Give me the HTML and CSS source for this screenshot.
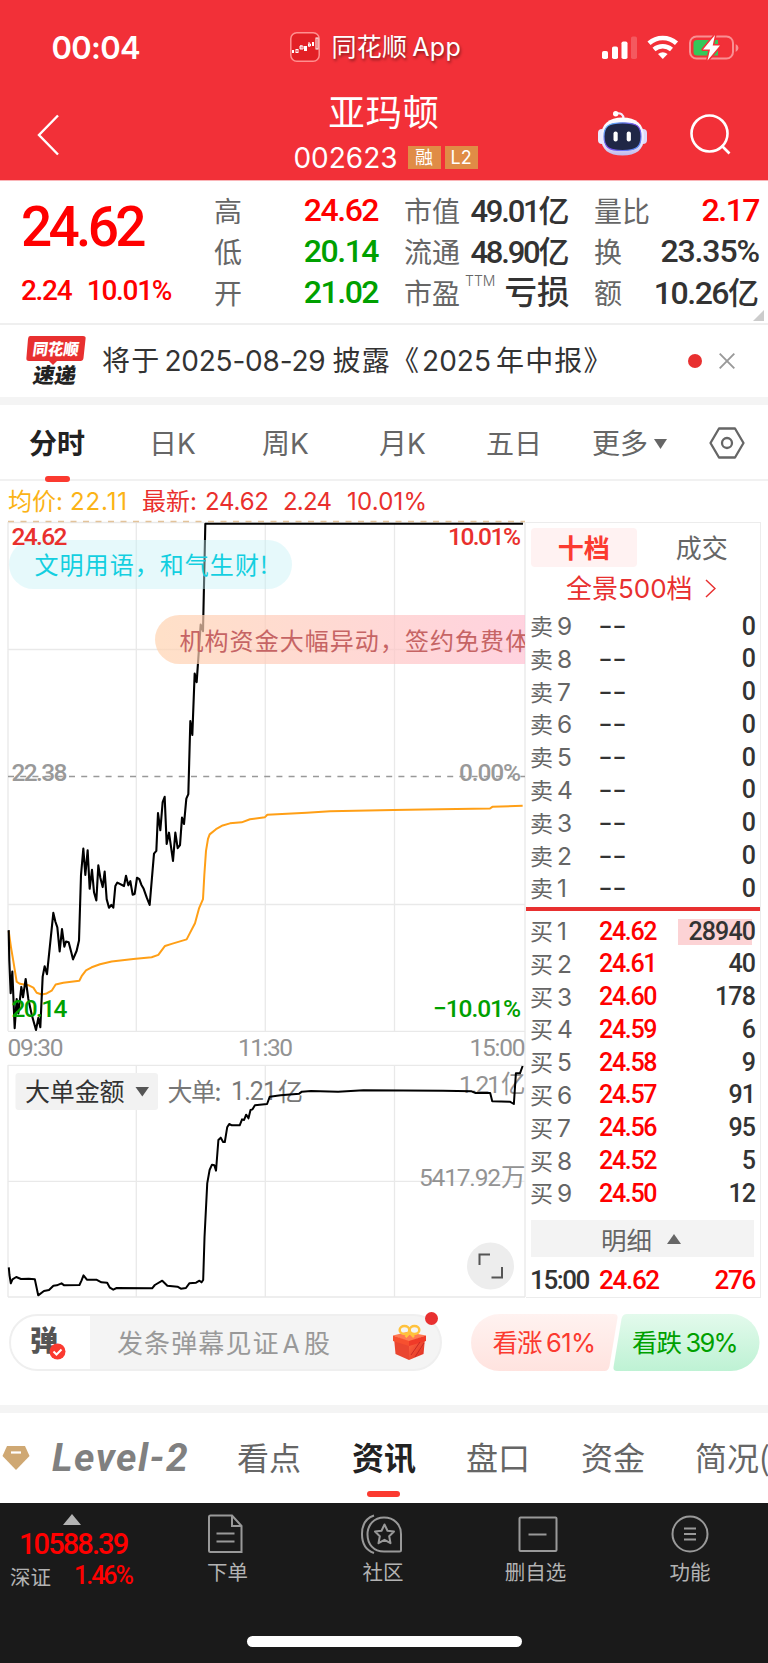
FILE: index.html
```html
<!DOCTYPE html>
<html lang="zh-CN">
<head>
<meta charset="utf-8">
<title>亚玛顿 002623</title>
<link rel="stylesheet" href="styles.css">
</head>
<body>
<header class="header">
  <div class="status">
    <div class="clock">00:04</div>
    <div class="island">
      <svg class="app-icon" width="30" height="30" viewBox="0 0 30 30"><rect x=".8" y=".8" width="28.4" height="28.4" rx="6" fill="#e22026" stroke="#ff8f8f" stroke-width="1.5"/><g fill="#fff"><rect x="2" y="18" width="2" height="3"/><rect x="14" y="14" width="3" height="5"/><rect x="22" y="10" width="2" height="4"/></g><g fill="none" stroke="#fff"><rect x="6" y="17.5" width="2" height="3"/><path d="M11 13v4M10 14h3v3h-3zM19 10v5M18.500 12h2v2h-2z"/><rect x="26" y="6" width="2" height="11"/></g></svg>
      <span class="app-name">同花顺 <i>App</i></span>
    </div>
    <svg class="indicators" width="150" height="30" viewBox="0 0 150 30">
      <g fill="#fff"><rect x="0" y="16" width="6" height="8" rx="1.800"/><rect x="10" y="11.500" width="6" height="12.500" rx="1.800"/><rect x="19.500" y="6.500" width="6" height="17.500" rx="1.800"/><rect x="29" y="1.500" width="6" height="22.500" rx="1.800" opacity=".2"/></g>
      <g fill="none" stroke="#fff" stroke-width="4.600"><path d="M47 8.300a20.500 20.500 0 0 1 27.500 0"/><path d="M52 14.500a13.500 13.500 0 0 1 17.500 0"/></g>
      <path fill="#fff" d="M56 19q4.800-3.600 9.600 0l-4.800 5z"/>
      <rect x="88" y="1.500" width="43" height="22" rx="6.500" fill="none" stroke="#f98f93" stroke-width="2"/>
      <path d="M95 5h17v15.500H95q-3.500 0-3.500-3.500V8.500Q91.500 5 95 5z" fill="#34c759"/><rect x="112" y="5" width="4" height="15.500" fill="#34c759"/>
      <path d="M133.700 9v8q2.800-1.300 2.800-4t-2.800-4z" fill="#f98f93"/>
      <path d="M113 0L101 14.500h7L105.500 25.500 118 10.500h-7.300z" fill="#fff" stroke="#f23038" stroke-width="3" stroke-linejoin="round" paint-order="stroke"/>
    </svg>
  </div>
  <div class="nav">
    <svg class="back" width="24" height="42" viewBox="0 0 24 42"><path d="M21 1.500L2 21l19 19.500" fill="none" stroke="#fff" stroke-width="2.400"/></svg>
    <div class="title">
      <h1>亚玛顿</h1>
      <div class="code"><span>002623</span><b class="margin-tag">融</b><b>L2</b></div>
    </div>
    <div class="actions">
      <svg width="50" height="46" viewBox="0 0 50 46">
        <defs><linearGradient id="shell" x2="0" y2="1"><stop stop-color="#fff"/><stop offset=".7" stop-color="#e8e6fb"/><stop offset="1" stop-color="#bdb8ec"/></linearGradient><linearGradient id="visor" x2="1" y2="1"><stop stop-color="#59c8ff"/><stop offset=".5" stop-color="#7a46e8"/><stop offset="1" stop-color="#58a0ff"/></linearGradient></defs>
        <path d="M17.500 3.500q8-1.500 8 5.500" fill="none" stroke="#f3ebff" stroke-width="2.200"/><circle cx="17.700" cy="3.700" r="2.700" fill="#fff"/>
        <rect x="0" y="19" width="8" height="15" rx="4" fill="#eceaff"/><rect x="41" y="19" width="8" height="15" rx="4" fill="#dcd9fa"/>
        <path d="M24.500 7.500C38 7.500 46 14 46 27S38 45.500 24.500 45.500 3 40 3 27 11 7.500 24.500 7.500z" fill="url(#shell)"/>
        <path d="M24.500 12.800c14 0 18.500 3 18.500 13.700s-4.500 14-18.500 14S6 37 6 26.500s4.500-13.700 18.500-13.700z" fill="#202746" stroke="url(#visor)" stroke-width="1.200"/>
        <rect x="15.500" y="21.500" width="4.200" height="10" rx="2" fill="#fff"/><rect x="28.700" y="21.500" width="4.200" height="10" rx="2" fill="#fff"/>
      </svg>
      <svg class="search" width="42" height="42" viewBox="0 0 42 42"><g fill="none" stroke="#fff" stroke-width="2.600"><circle cx="19.500" cy="20.500" r="18"/><path d="M31.500 32.500l8 8"/></g></svg>
    </div>
  </div>
</header>

<section class="quote">
  <div class="last"><strong>24.62</strong><div class="change"><span>2.24</span><span>10.01%</span></div></div>
  <dl class="facts">
    <div><dt>高</dt><dd class="up">24.62</dd></div>
    <div><dt>低</dt><dd class="down">20.14</dd></div>
    <div><dt>开</dt><dd class="down">21.02</dd></div>
  </dl>
  <dl class="facts">
    <div><dt>市值</dt><dd class="cap">49.01<em>亿</em></dd></div>
    <div><dt>流通</dt><dd class="cap">48.90<em>亿</em></dd></div>
    <div><dt>市盈<sup>TTM</sup></dt><dd class="cap loss"><em>亏损</em></dd></div>
  </dl>
  <dl class="facts">
    <div><dt>量比</dt><dd class="up">2.17</dd></div>
    <div><dt>换</dt><dd class="turnover">23.35%</dd></div>
    <div><dt>额</dt><dd>10.26<em>亿</em></dd></div>
  </dl>
  <i class="corner"></i>
</section>

<section class="notice">
  <svg width="64" height="52" viewBox="0 0 64 52">
    <path d="M5 1h53q3 0 2.600 2.500L58.500 23q-.4 3-3 3H32l-4 4-4-4H4q-3 0-2.600-3L3 4q.3-3 2-3z" fill="#e83030"/>
    <text class="logo-text" transform="translate(7 20) skewX(-8)" font-size="16" fill="#fff" textLength="46" lengthAdjust="spacingAndGlyphs">同花顺</text>
    <text class="logo-text" transform="translate(7 47.500) skewX(-10)" font-size="21" fill="#222" textLength="43" lengthAdjust="spacingAndGlyphs">速递</text>
  </svg>
  <p>将于<span class="date">2025-08-29</span>披露《<span class="year">2025</span>年中报》</p>
  <i class="dot"></i>
  <svg class="close" width="16" height="16" viewBox="0 0 16 16"><path d="M.7.700l14.600 14.600M15.300.700L.7 15.300" stroke="#999" stroke-width="1.900"/></svg>
</section>

<nav class="periods">
  <a class="active">分时</a><a>日K</a><a>周K</a><a>月K</a><a>五日</a><a class="more">更多<svg width="13" height="10" viewBox="0 0 13 10"><path d="M0 0h13L6.500 10z" fill="#666"/></svg></a>
  <svg class="settings" width="36" height="32" viewBox="0 0 36 32"><path d="M10 1.500h16L34.500 16 26 30.500H10L1.500 16z" fill="none" stroke="#666" stroke-width="2.300" stroke-linejoin="round"/><circle cx="18" cy="16" r="5" fill="none" stroke="#666" stroke-width="2.300"/></svg>
</nav>

<main class="market">
  <svg class="chart" width="526" height="817" viewBox="0 481 526 817">
    <defs>
      <linearGradient id="promo"><stop stop-color="#ffd3b0"/><stop offset="1" stop-color="#ffb9db"/></linearGradient>
      <clipPath id="plot"><rect x="8" y="520" width="517" height="777"/></clipPath>
    </defs>
    <g class="legend">
      <g fill="#fbb316"><text x="8" y="510" textLength="55">均价:</text><text x="70" y="510" textLength="57">22.11</text></g>
      <g fill="#e9302d"><text x="142" y="510" textLength="55">最新:</text><text x="205" y="510" textLength="64">24.62</text><text x="283" y="510" textLength="49">2.24</text><text x="347" y="510" textLength="80">10.01%</text></g>
    </g>
    <g fill="none" stroke="#e9e9e9" stroke-width="1.300">
      <path d="M8 522.500H525M8 649.500H525M8 904.500H525M8 1031.400H525M8 1065.400H525M8 1181.400H525M8 1297H525M8 522V1031M8 1065V1297M136.300 522V1031M136.300 1065V1297M265.300 522V1031M265.300 1065V1297M394.500 522V1031M394.500 1065V1297M525 522V1297"/>
    </g>
    <path d="M8 521.500H525" stroke="#e3c39a" stroke-width="1.300" stroke-dasharray="6 6.500"/>
    <path d="M8 776.500H525" stroke="#999" stroke-width="1.500" stroke-dasharray="6 6.200"/>
    <g transform="translate(0 510) scale(.33333 .34435)" fill="none" stroke-linejoin="round">
      <polyline vector-effect="non-scaling-stroke" stroke="#ff9f16" stroke-width="2" points="26,1222 33,1270 40,1310 50,1370 60,1376 85,1380 100,1387 110,1402 125,1407 140,1404 155,1396 167,1378 190,1373 238,1367 246,1352 258,1337 275,1328 300,1319 335,1311 400,1304 455,1299 475,1292 495,1266 515,1260 560,1247 570,1228 585,1200 597,1157 609,1130 613,1060 618,990 624,955 629,942 648,927 668,916 690,910 725,907 750,898 795,892 802,885 920,879 990,875 1180,871 1320,869 1470,867 1477,862 1568,859"/>
      <polyline vector-effect="non-scaling-stroke" stroke="#000" stroke-width="2.100" points="26,1220 28,1310 32,1403 37,1340 44,1505 50,1420 55,1462 64,1385 69,1415 77,1362 85,1420 95,1465 108,1510 115,1475 121,1502 128,1355 134,1325 141,1348 160,1170 166,1195 172,1212 179,1282 186,1217 193,1268 198,1253 206,1255 214,1285 219,1305 230,1280 237,1250 243,1060 250,983 256,1060 263,988 269,1100 276,1045 282,1110 289,1134 295,1032 301,1068 308,1095 314,1050 320,1130 327,1155 334,1147 340,1155 346,1092 352,1082 372,1092 378,1062 385,1090 391,1078 398,1117 404,1115 411,1068 418,1072 424,1088 431,1100 440,1125 449,1147 462,998 469,990 474,880 481,930 488,848 494,833 500,970 507,937 519,1019 526,937 533,982 540,973 546,893 552,912 559,838 565,825 571,613 577,653 584,475 590,500 602,333 609,352 616,40 1569,40"/>
    </g>
    <g clip-path="url(#plot)" class="bullet">
      <rect x="9" y="540" width="283" height="49" rx="24.500" fill="#c4f0f6" opacity=".43"/>
      <text x="34.500" y="574" fill="#13cfe0">文明用语，和气生财!</text>
      <rect x="155" y="615" width="480" height="49" rx="24.500" fill="url(#promo)" opacity=".7"/>
      <text x="179.500" y="649.500" fill="#c66464">机构资金大幅异动，签约免费体</text>
    </g>
    <g class="axis">
      <g fill="#e9302d"><text x="11.500" y="545" textLength="56">24.62</text><text x="448" y="545" textLength="73">10.01%</text></g>
      <g fill="#999"><text x="11.500" y="781" textLength="56">22.38</text><text x="459" y="781" textLength="62">0.00%</text></g>
      <g fill="#00a000"><text x="11.500" y="1017" textLength="56">20.14</text><text x="433" y="1017" textLength="88">−10.01%</text></g>
    </g>
    <g class="axis time" fill="#939393"><text x="7.500" y="1056" textLength="56">09:30</text><text x="238" y="1056" textLength="55">11:30</text><text x="469.500" y="1056" textLength="56">15:00</text></g>
    <rect x="15.500" y="1073" width="142.500" height="37" rx="3" fill="#f2f2f2"/>
    <text class="label" x="25" y="1101" fill="#333" textLength="99.500">大单金额</text>
    <path d="M135.500 1087h13.500l-6.700 9.500z" fill="#555"/>
    <text class="label" x="167.500" y="1101" fill="#777" textLength="54">大单:</text><text class="label mono" x="231" y="1100" fill="#777" textLength="46">1.21</text><text class="label" x="278" y="1101" fill="#777">亿</text>
    <g class="axis time" fill="#939393"><text x="459" y="1093" textLength="42">1.21</text><text x="501" y="1093">亿</text><text x="419" y="1186" textLength="82">5417.92</text><text x="501" y="1186">万</text></g>
    <g transform="translate(0 1030) scale(.33807 .33333)" fill="none" stroke="#000" stroke-linejoin="round">
      <polyline vector-effect="non-scaling-stroke" stroke-width="2" points="26,712 28,735 32,760 37,748 48,741 62,747 85,746 103,748 113,796 130,783 145,780 158,767 168,766 182,760 190,766 235,765 241,752 247,736 257,749 285,749 300,757 317,758 325,773 335,779 345,774 450,775 458,765 480,752 495,767 525,770 535,776 550,774 560,760 580,758 590,752 596,757 601,750 605,620 613,460 620,420 627,404 634,406 639,422 646,330 653,323 660,336 665,336 672,292 678,282 686,286 709,286 716,268 722,270 728,254 735,265 741,240 747,238 754,226 790,222 798,200 830,196 885,191 893,185 920,183 1000,185 1075,181 1310,182 1395,184 1407,189 1450,189 1456,214 1508,215 1520,222 1526,130 1538,130 1546,108"/>
    </g>
    <circle cx="490.500" cy="1266" r="23.500" fill="#ededed"/>
    <path d="M479.500 1265v-10.500H490M491.500 1277.500H502V1267" fill="none" stroke="#555" stroke-width="2"/>
  </svg>

  <aside class="depth">
    <div class="depth-tabs"><b>十档</b><span>成交</span></div>
    <div class="full-depth">全景500档<svg width="11" height="19" viewBox="0 0 11 19"><path d="M1 1l9 8.500L1 18" fill="none" stroke="#e83030" stroke-width="1.500"/></svg></div>
    <ul class="sell">
      <li><span>卖<i>9</i></span><b>--</b><em>0</em></li>
      <li><span>卖<i>8</i></span><b>--</b><em>0</em></li>
      <li><span>卖<i>7</i></span><b>--</b><em>0</em></li>
      <li><span>卖<i>6</i></span><b>--</b><em>0</em></li>
      <li><span>卖<i>5</i></span><b>--</b><em>0</em></li>
      <li><span>卖<i>4</i></span><b>--</b><em>0</em></li>
      <li><span>卖<i>3</i></span><b>--</b><em>0</em></li>
      <li><span>卖<i>2</i></span><b>--</b><em>0</em></li>
      <li><span>卖<i>1</i></span><b>--</b><em>0</em></li>
    </ul>
    <ul class="buy">
      <li class="large"><span>买<i>1</i></span><b>24.62</b><em>28940</em></li>
      <li><span>买<i>2</i></span><b>24.61</b><em>40</em></li>
      <li><span>买<i>3</i></span><b>24.60</b><em>178</em></li>
      <li><span>买<i>4</i></span><b>24.59</b><em>6</em></li>
      <li><span>买<i>5</i></span><b>24.58</b><em>9</em></li>
      <li><span>买<i>6</i></span><b>24.57</b><em>91</em></li>
      <li><span>买<i>7</i></span><b>24.56</b><em>95</em></li>
      <li><span>买<i>8</i></span><b>24.52</b><em>5</em></li>
      <li><span>买<i>9</i></span><b>24.50</b><em>12</em></li>
    </ul>
    <div class="detail">明细<svg width="14" height="10" viewBox="0 0 14 10"><path d="M7 0l7 10H0z" fill="#666"/></svg></div>
    <div class="tick"><span>15:00</span><b>24.62</b><em>276</em></div>
  </aside>
</main>

<section class="social">
  <div class="barrage">
    <div class="barrage-toggle">弹<svg width="17" height="17" viewBox="0 0 17 17"><circle cx="8.500" cy="8.500" r="8" fill="#fb3a30"/><path d="M4.500 8.500l3 3 5-5" fill="none" stroke="#fff" stroke-width="2"/></svg></div>
    <span class="placeholder">发条弹幕见证<i>A</i>股</span>
    <svg class="gift" width="36" height="38" viewBox="0 0 36 38">
      <defs><linearGradient id="box" x2="1" y2="1"><stop stop-color="#ff6a44"/><stop offset="1" stop-color="#dc281e"/></linearGradient></defs>
      <path d="M2 14l15 5v17L3.500 30z" fill="#ea4630"/><path d="M17 19l16-5-1.500 16L17 36z" fill="url(#box)"/>
      <path d="M1 11.500L15 8l19 3.500L17 18z" fill="#ff7a52"/><path d="M1 11.500L17 17v5L1 17z" fill="#f7502f"/><path d="M17 17l17-5.500V17l-17 5z" fill="#f03a28"/>
      <path d="M19 31l9-13M23 33l9-14" stroke="#c92a24" stroke-width="1"/>
      <g fill="none" stroke="#ffc23d" stroke-width="2.500"><ellipse cx="12.500" cy="6" rx="4.800" ry="4"/><ellipse cx="22.500" cy="6" rx="4.800" ry="4"/><path d="M17.500 9l-4 4M18 9l4 4"/></g>
    </svg>
    <i class="dot"></i>
  </div>
  <div class="vote">
    <svg width="290" height="57" viewBox="0 0 290 57">
      <defs><linearGradient id="bull" x2="0" y2="1"><stop stop-color="#fff2f0"/><stop offset="1" stop-color="#ffe3df"/></linearGradient><linearGradient id="bear" x2="0" y2="1"><stop stop-color="#e3faec"/><stop offset="1" stop-color="#bef2d4"/></linearGradient></defs>
      <path d="M29.500 0H144q4 0 3.500 4l-8 48q-1 5-5 5h-105a28.500 28.500 0 0 1 0-57z" fill="url(#bull)"/>
      <path d="M157 0H261a28.500 28.500 0 0 1 0 57H147q-4 0-3.500-4l8-48q1-5 5.500-5z" fill="url(#bear)"/>
      <g class="vote-label"><g fill="#fb3a30"><text x="22.500" y="38" textLength="50">看涨</text><text x="76" y="37.500" textLength="50">61%</text></g><g fill="#00a000"><text x="162" y="38" textLength="50">看跌</text><text x="215.500" y="37.500" textLength="53">39%</text></g></g>
    </svg>
  </div>
</section>

<nav class="sections">
  <svg class="gem" width="28" height="26" viewBox="0 0 28 26"><path d="M5 1h18l4.500 10L14 25 .5 11z" fill="#cfa873"/><path d="M9 7.500h10" stroke="#fff" stroke-width="2.200"/></svg>
  <a class="level">Level-2</a><a>看点</a><a class="active">资讯</a><a>盘口</a><a>资金</a><a class="last-tab">简况(</a>
</nav>

<footer class="toolbar">
  <div class="index"><svg width="18" height="11" viewBox="0 0 18 11"><path d="M9 0l9 11H0z" fill="#b3b3b3"/></svg><b>10588.39</b><p><span>深证</span><em>1.46%</em></p></div>
  <div class="tool"><svg width="44" height="40" viewBox="2.500 0 44 40"><g fill="none" stroke="#999" stroke-width="2"><path d="M7 1.500h21.500L38 12v26H7q-1.500 0-1.500-1.500V3Q5.500 1.500 7 1.500z"/><path d="M28.500 1.500V12H38M13 19.500h18M13 27.500h18"/></g></svg>下单</div>
  <div class="tool"><svg width="44" height="40" viewBox="1 0 44 40"><g fill="none" stroke="#999" stroke-width="2"><path d="M24 3.500c10 0 17 7 17 16.500v16q0 1.500-1.500 1.500H24C13.500 37.500 7.500 30 7.500 20.500S14 3.500 24 3.500z"/><path d="M14 1.500C5 4.500 2 12 2 20S5 36 14 39"/><path stroke-linejoin="round" d="M24.500 10.500l3 6.300 6.500.7-4.800 4.700 1.300 7-6-3.400-6 3.400 1.300-7-4.800-4.700 6.500-.7z"/></g></svg>社区</div>
  <div class="tool"><svg width="44" height="40" viewBox="-1.500 0 44 40"><g fill="none" stroke="#999" stroke-width="2"><rect x="4" y="3.500" width="37" height="33.500" rx="1"/><path d="M13 20.500h18"/></g></svg>删自选</div>
  <div class="tool"><svg width="44" height="40" viewBox="0 0 44 40"><g fill="none" stroke="#999" stroke-width="2"><circle cx="22" cy="20" r="17.500"/><path d="M16 14.500h12M16 20h12M16 25.500h12"/></g></svg>功能</div>
  <i class="home-bar"></i>
</footer>
</body>
</html>
```

FILE: styles.css
```css
* { box-sizing: border-box; }
body, h1, p, dl, dd, ul { margin: 0; padding: 0; }
body {
  width: 768px; background: #fff; color: #333; overflow-x: hidden;
  font-family: Inter, "Noto Sans CJK SC", sans-serif; white-space: nowrap;
}
i, em { font-style: normal; }
svg { display: block; flex: none; }
ul { list-style: none; }

/* header */
.header { height: 181px; background: #f23038; border-bottom: 1px solid #fab5b8; color: #fff; }
.status { height: 95px; display: grid; grid-template-columns: 290px 1fr 166px; align-items: center; }
.clock { padding-left: 51.500px; font-size: 31px; font-weight: 600; letter-spacing: -.7px; }
.island { display: flex; align-items: center; gap: 11.500px; font-size: 25px; line-height: 30px; text-shadow: 1px 2px 3px rgba(0,0,0,.45); margin-top: -2px; }
.app-name { font-family: "Noto Sans CJK SC", sans-serif; letter-spacing: .3px; margin-top: -2px; }
.app-name i { font-family: Inter, sans-serif; margin-left: -1px; }
.indicators { margin-top: 5px; }
.nav { height: 85px; display: grid; grid-template-columns: 170px 1fr 170px; align-items: center; }
.back { margin: -5px 0 0 37px; }
.title { text-align: center; }
.title h1 { font: 400 36.500px/50px "Noto Sans CJK SC", sans-serif; letter-spacing: .7px; margin-top: -13px; }
.code { display: flex; justify-content: center; align-items: center; gap: 4px; height: 38px; margin-top: 3px; padding-left: 3px; font-size: 28px; letter-spacing: 0; }
.code span { margin-right: 6px; }
.code b { width: 33px; height: 23px; background: #e08c46; font: 400 18px/23px Inter, "Noto Sans CJK SC", sans-serif; letter-spacing: 0; }
.actions { display: flex; align-items: center; gap: 42px; margin-top: -9px; }
.search { margin-top: 2px; }

/* quote */
.quote { position: relative; height: 144px; border-bottom: 2px solid #efefef; padding: 9px 9px 0 22px; display: grid; grid-template-columns: 166px 164px 164px 165px; column-gap: 26px; font-family: Roboto, "Noto Sans CJK SC", sans-serif; font-weight: 500; }
.last { color: #f00; }
.last strong { display: block; margin-left: -1px; font-size: 55px; font-weight: 500; line-height: 74px; letter-spacing: -3.700px; }
.change { display: flex; gap: 15.500px; margin-left: -1px; font-size: 28px; line-height: 32px; margin-top: 11px; letter-spacing: -1.300px; }
.facts div { height: 41px; display: flex; justify-content: space-between; align-items: center; }
.facts dt { position: relative; color: #666; font: 400 28px/41px "Noto Sans CJK SC", sans-serif; }
.facts dd { font-size: 32px; line-height: 39px; padding-bottom: 1px; letter-spacing: -1.500px; color: #333; }
.facts dd.up { color: #f00; }
.facts dd.down { color: #00a000; }
.facts dd em { font: 500 31px/38px "Noto Sans CJK SC", sans-serif; letter-spacing: 0; }
.facts dd.cap { font-size: 31px; letter-spacing: -2.200px; margin-right: -1.500px; }
.facts dd.loss em { font-size: 32.500px; }
.facts dd.turnover { letter-spacing: -1.100px; }
.facts sup { position: absolute; left: 61px; top: -6px; font: 300 14px/30px Inter, sans-serif; }
.corner { position: absolute; right: 4px; top: 129px; border-left: 11px solid transparent; border-bottom: 11px solid #ccc; }

/* notice */
.notice { height: 72px; display: flex; align-items: center; padding-left: 25px; }
.logo-text { font-family: "Noto Sans CJK SC", sans-serif; font-weight: 900; }
.notice p { margin-left: 13px; width: 584px; font: 400 28px/38px "Noto Sans CJK SC", sans-serif; letter-spacing: 1.200px; padding-bottom: 2px; }
.date, .year { font-family: Inter, sans-serif; font-size: 28px; margin: 0 5px; }
.date { letter-spacing: -.2px; margin-right: 7px; margin-left: 4px; }
.year { margin-left: 2px; letter-spacing: 0; }
.dot { width: 14px; height: 14px; border-radius: 50%; background: #e83030; }
.notice .dot { margin-left: 2px; }
.close { margin-left: 17px; }

/* period tabs */
.periods { height: 84px; border-top: 8px solid #f4f4f4; border-bottom: 2px solid #f1f1f1; padding-left: 29px; display: grid; grid-template-columns: 120px 113px 117px 107px 106px 117px 36px; align-items: center; font: 400 28px/74px Inter, "Noto Sans CJK SC", sans-serif; color: #666; }
.periods a { padding-top: 2px; }
.periods .active { position: relative; color: #222; font-weight: 700; }
.periods .active::after { content: ""; position: absolute; left: 16px; bottom: -1px; width: 25px; height: 6px; border-radius: 3px; background: #fb3a30; }
.more { display: flex; align-items: center; gap: 6px; }

/* charts and order book */
.market { display: flex; height: 817px; }
.legend { font: 400 24px Inter, "Noto Sans CJK SC", sans-serif; }
.bullet { font: 400 24px "Noto Sans CJK SC", sans-serif; letter-spacing: 1.050px; }
.axis { font: 500 24.500px Roboto, "Noto Sans CJK SC", sans-serif; }
.axis.time { font-weight: 400; }
.label { font: 400 25px "Noto Sans CJK SC", sans-serif; }
.label.mono { font-family: Roboto, sans-serif; }
.depth { width: 234.500px; margin-top: 41px; height: 776px; border: 1.500px solid #ececec; border-left: 0; padding: 5px 4.500px 0 5px; font-family: Roboto, "Noto Sans CJK SC", sans-serif; font-weight: 500; }
.depth-tabs { display: grid; grid-template-columns: 105.500px 1fr; height: 40px; text-align: center; font: 400 26px/37px "Noto Sans CJK SC", sans-serif; color: #666; }
.depth-tabs b { height: 39px; background: #fff2f2; border-radius: 4px; color: #fb3a30; }
.depth-tabs span { padding-left: 12px; text-align: center; }
.full-depth { display: flex; align-items: center; gap: 12px; height: 41px; padding-left: 35px; font: 400 26px/40px Inter, "Noto Sans CJK SC", sans-serif; letter-spacing: 0; color: #e83030; }
.depth ul { margin: 0 -5px; padding: 0 5px 0 4px; }
.depth li, .tick { display: grid; grid-template-columns: 69px 80px 1fr; align-items: center; height: 32.800px; font-size: 25px; line-height: 32px; }
.depth li span { font: 400 23px/30px "Noto Sans CJK SC", sans-serif; color: #666; padding-bottom: 2px; }
.depth li span i { font-family: Inter, sans-serif; font-size: 24.500px; margin-left: 4px; }
.depth li b { font-size: 25px; font-weight: 500; letter-spacing: -1.300px; }
.depth li em { text-align: right; letter-spacing: -.9px; }
.depth .sell { height: 302px; border-bottom: 4px solid #e83030; }
.depth .sell li b { font-family: "Liberation Sans", sans-serif; font-weight: 400; font-size: 42px; letter-spacing: 0; transform: scaleY(.7); margin-left: -.500px; padding-bottom: 3px; }
.depth .buy { padding-top: 4px; height: 309px; }
.buy b { color: #f00; }
.large em { background: linear-gradient(#fcd3d5, #fcd3d5) 0 50% / 74px 26px no-repeat; margin-left: -1.500px; }
.detail { margin-right: 1px; height: 37px; background: #f3f3f3; display: flex; justify-content: center; align-items: center; gap: 15px; font: 400 25.500px/37px "Noto Sans CJK SC", sans-serif; color: #666; padding-right: 3px; }
.depth .tick { height: 45px; font-size: 26px; }
.tick span { letter-spacing: -1.400px; margin-left: -1px; }
.tick b, .tick em { font-weight: 500; color: #f00; letter-spacing: -1.300px; margin-left: -1px; }
.tick em { text-align: right; }

/* barrage and vote */
.social { height: 107px; padding: 16px 8px 0 9px; display: flex; justify-content: space-between; }
.barrage { position: relative; width: 433px; height: 57px; border: 2px solid #efefef; border-radius: 29px; background: #f4f4f4; display: flex; align-items: center; }
.barrage-toggle { position: relative; width: 79px; height: 53px; border-radius: 27px 0 0 27px; background: #fff; padding-left: 19px; font: 900 28px/47px "Noto Sans CJK SC", sans-serif; color: #555; }
.barrage-toggle svg { position: absolute; left: 38px; top: 27px; }
.placeholder { width: 275px; padding-left: 27px; font: 400 26px/52px "Noto Sans CJK SC", sans-serif; letter-spacing: 1.100px; color: #999; }
.placeholder i { font-family: Inter, sans-serif; font-size: 25px; margin: 0 3px; }
.gift { margin-left: 27px; }
.barrage .dot { position: absolute; right: 2px; top: -4px; width: 13px; height: 13px; }
.vote-label { font: 400 25.500px Inter, "Noto Sans CJK SC", sans-serif; }

/* section tabs */
.sections { height: 98px; border-top: 8px solid #f4f4f4; overflow: hidden; display: grid; grid-template-columns: 52px 183px 115px 114px 115px 114px 75px; align-items: center; font: 400 32px/86px "Noto Sans CJK SC", sans-serif; color: #666; }
.gem { margin-left: 2px; }
.level { font: italic 700 39px/88px Roboto, sans-serif; letter-spacing: 1.500px; color: #808080; }
.sections a:nth-of-type(n+2) { padding-left: 2px; margin-top: -4px; }
.sections .active { position: relative; color: #222; font-weight: 700; }
.sections .active::after { content: ""; position: absolute; left: 17px; bottom: 2px; width: 33px; height: 6px; border-radius: 3px; background: #fb3a30; }

/* bottom toolbar */
.toolbar { position: relative; height: 160px; background: #1a1a1a; color: #b3b3b3; display: grid; grid-template-columns: 150px 155px 156px 149px 160px; font: 400 20.500px/28px "Noto Sans CJK SC", sans-serif; }
.tool { display: flex; flex-direction: column; align-items: center; padding-top: 11px; gap: 3px; }
.index { padding: 11px 0 0 10px; }
.index svg { margin-left: 53px; }
.index b { display: block; margin-left: 9px; font: 500 29px/38px Roboto, sans-serif; letter-spacing: -1.900px; color: #f00; }
.index p { display: flex; gap: 23px; line-height: 26px; }
.index em { font: 500 25px/26px Roboto, sans-serif; letter-spacing: -2px; color: #f00; }
.home-bar { position: absolute; left: 247px; bottom: 16px; width: 275px; height: 11px; border-radius: 6px; background: #fff; }
```
